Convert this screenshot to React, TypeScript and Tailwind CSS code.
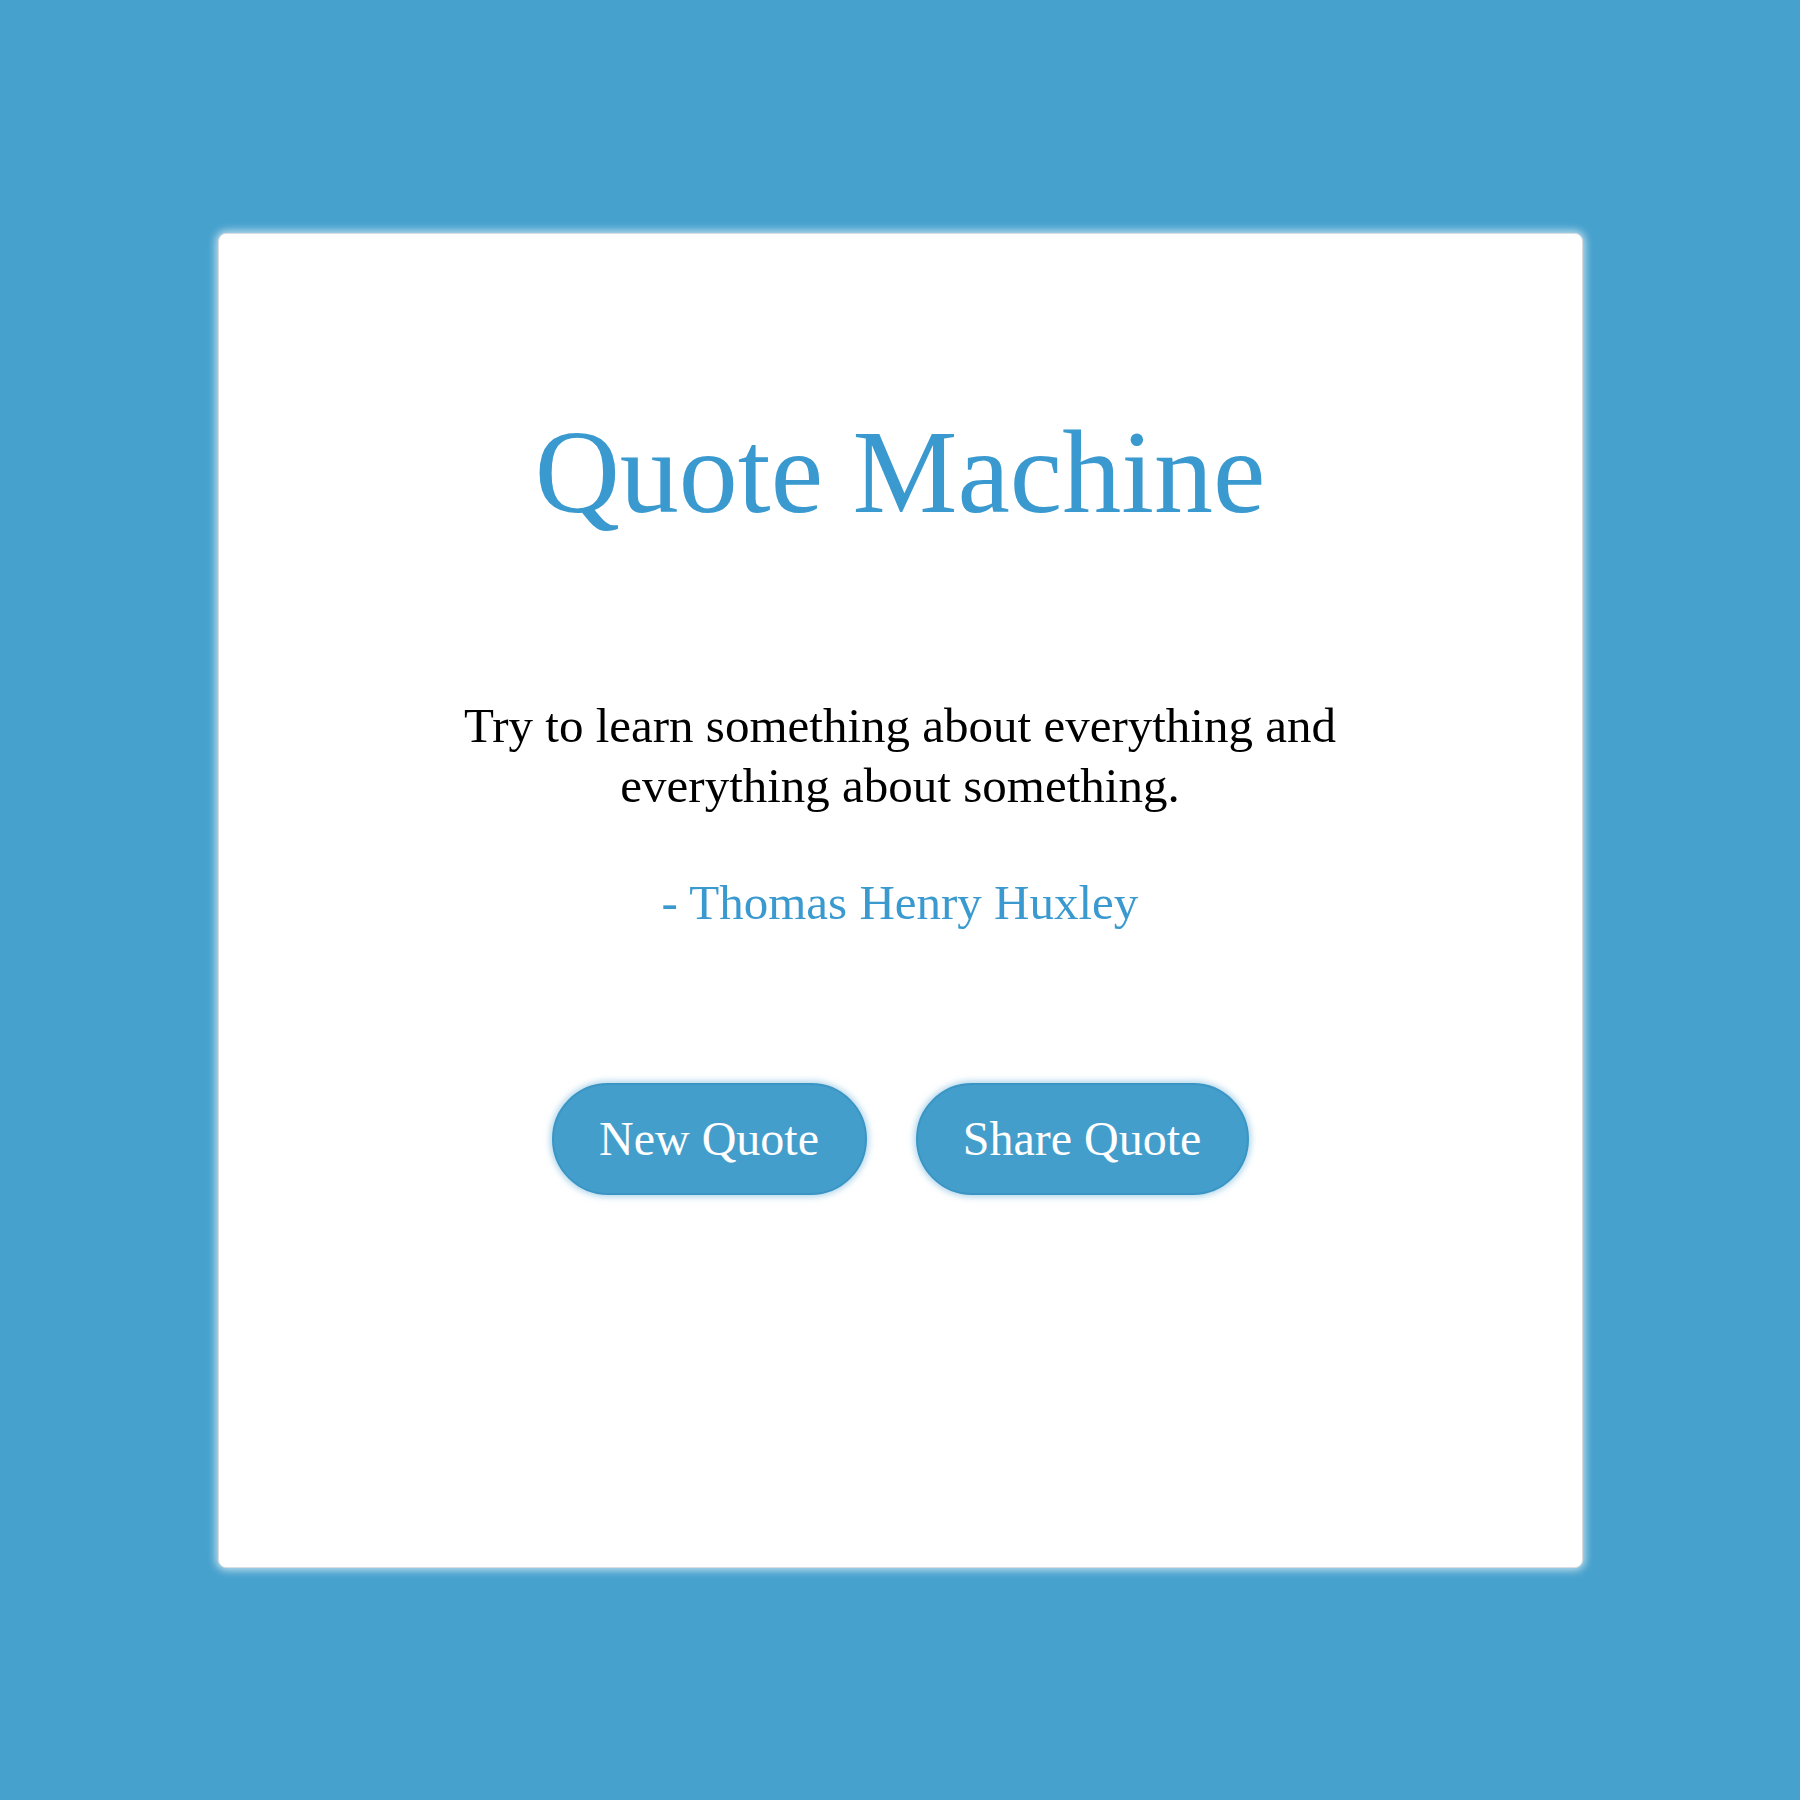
import React, { useState } from 'react';

const quotes = [
  {
    text: 'Try to learn something about everything and everything about something.',
    author: 'Thomas Henry Huxley',
  },
];

export default function App() {
  const [index, setIndex] = useState(0);
  const quote = quotes[index];

  return (
    <div
      className="w-full min-h-[1800px] bg-[#46a1cd] flex items-center justify-center"
      style={{ fontFamily: '"Liberation Serif", "DejaVu Serif", serif' }}
    >
      <div className="w-[1365px] h-[1335px] bg-white rounded-lg border border-[#d9dde0] shadow-[0_0_8px_2px_rgba(255,255,255,0.7)] flex flex-col items-center pt-[180px]">
        <h1 className="text-[118px] leading-[118px] text-[#3a9ad0] font-normal">Quote Machine</h1>
        <p className="mt-[164px] max-w-[950px] text-center text-[49px] leading-[60px] text-black">
          {quote.text}
        </p>
        <p className="mt-[57px] text-[49px] leading-[60px] text-[#3a9ad0]">- {quote.author}</p>
        <div className="mt-[150px] flex gap-[49px]">
          <button
            onClick={() => setIndex((index + 1) % quotes.length)}
            className="w-[315px] h-[112px] rounded-full bg-[#449ecb] border-2 border-[#3a95c5] text-white text-[48px] flex items-center justify-center shadow-[0_0_6px_2px_rgba(120,185,220,0.6)]"
          >
            New Quote
          </button>
          <button className="w-[333px] h-[112px] rounded-full bg-[#449ecb] border-2 border-[#3a95c5] text-white text-[48px] flex items-center justify-center shadow-[0_0_6px_2px_rgba(120,185,220,0.6)]">
            Share Quote
          </button>
        </div>
      </div>
    </div>
  );
}
